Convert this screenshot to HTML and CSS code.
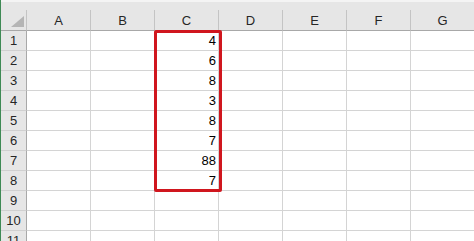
FILE: index.html
```html
<!DOCTYPE html>
<html lang="en">
<head>
    <meta charset="UTF-8">
    <title>Sheet</title>
    <link rel="stylesheet" href="styles.css">
</head>
<body>
    <div class="window">
        <div class="topstrip"></div>
        <div class="sheet" id="sheet">
            <div class="corner">
                <svg width="13" height="11" viewBox="0 0 13 11"><polygon points="13,0 13,11 0,11" fill="#b5b5b5"/></svg>
            </div>
        </div>
    </div>

    <script>
        const cols = ['A', 'B', 'C', 'D', 'E', 'F', 'G'];
        const values = { 1: '4', 2: '6', 3: '8', 4: '3', 5: '8', 6: '7', 7: '88', 8: '7' };
        const sheet = document.getElementById('sheet');

        cols.forEach(c => {
            const h = document.createElement('div');
            h.className = 'colhead';
            h.textContent = c;
            sheet.appendChild(h);
        });

        for (let r = 1; r <= 11; r++) {
            const rh = document.createElement('div');
            rh.className = 'rowhead';
            rh.textContent = r;
            sheet.appendChild(rh);
            cols.forEach(c => {
                const cell = document.createElement('div');
                cell.className = 'cell';
                if (c === 'C' && values[r]) cell.textContent = values[r];
                sheet.appendChild(cell);
            });
        }

        // red selection frame over C1:C8
        const frame = document.createElement('div');
        frame.className = 'frame';
        sheet.appendChild(frame);
    </script>
</body>
</html>
```

FILE: styles.css
```css
body, html {
    margin: 0;
    padding: 0;
    width: 100%;
    height: 100%;
    overflow: hidden;
    background: #fff;
    font-family: "Liberation Sans", Arial, sans-serif;
}
.window {
    border-left: 1px solid #3f8a55;
    height: 100%;
}
.topstrip {
    height: 10px;
    background: #e6e6e6;
    border-top: 2px solid #f4f4f4;
    box-sizing: border-box;
}
.sheet {
    position: relative;
    display: grid;
    grid-template-columns: 26px repeat(7, 64px);
    grid-template-rows: 21px;
    grid-auto-rows: 20px;
}
.corner {
    background: #e6e6e6;
    border-right: 1px solid #c4c4c4;
    border-bottom: 1px solid #a8a8a8;
    display: flex;
    align-items: flex-end;
    justify-content: flex-end;
    padding: 0 2px 3px 0;
}
.colhead {
    background: #e6e6e6;
    border-right: 1px solid #c4c4c4;
    border-bottom: 1px solid #a8a8a8;
    color: #262626;
    font-size: 13px;
    display: flex;
    align-items: center;
    justify-content: center;
    padding-top: 1px;
}
.rowhead {
    background: #e6e6e6;
    border-right: 1px solid #a8a8a8;
    border-bottom: 1px solid #d0d0d0;
    color: #262626;
    font-size: 13px;
    display: flex;
    align-items: center;
    justify-content: center;
}
.cell {
    border-right: 1px solid #d4d4d4;
    border-bottom: 1px solid #d4d4d4;
    color: #000;
    font-size: 13px;
    display: flex;
    align-items: center;
    justify-content: flex-end;
    padding-right: 2px;
}
.sheet > div {
    box-sizing: border-box;
}
.frame {
    position: absolute;
    left: 153px;
    top: 20px;
    width: 68px;
    height: 162px;
    border: 3px solid #d0161e;
    border-radius: 2px;
}
```
